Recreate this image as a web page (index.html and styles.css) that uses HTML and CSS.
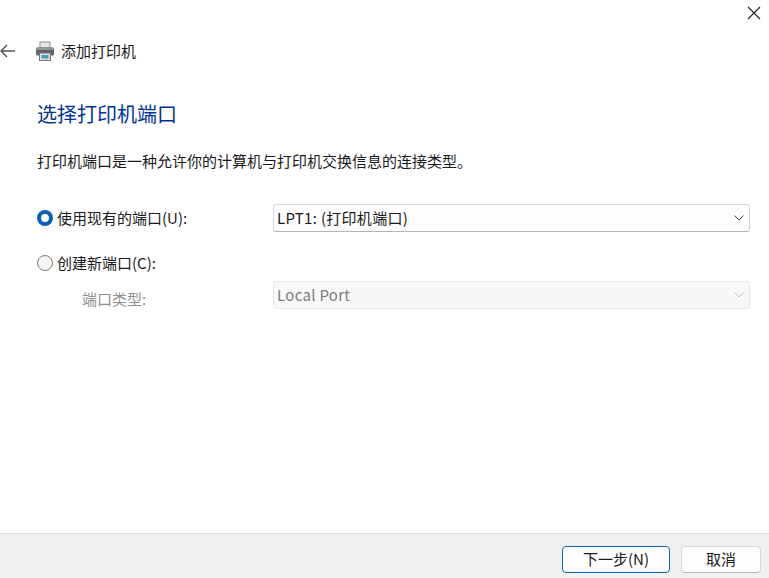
FILE: index.html
```html
<!DOCTYPE html>
<html lang="zh">
<head>
<meta charset="utf-8">
<title>添加打印机</title>
<link rel="stylesheet" href="styles.css">
</head>
<body>
<div class="dialog">
  <div class="closebar">
    <svg class="close" width="14" height="14" viewBox="0 0 14 14"><path d="M1 1L13 13M13 1L1 13" stroke="#222" stroke-width="1.1" fill="none"/></svg>
  </div>
  <div class="nav">
    <svg class="back" width="16" height="14" viewBox="0 0 16 14"><path d="M15 7H1M7 1L1 7L7 13" stroke="#555" stroke-width="1.5" fill="none"/></svg>
    <svg class="printer" width="20" height="20" viewBox="0 0 20 20">
      <rect x="5" y="1" width="10" height="6" fill="#e9e9ec" stroke="#8a8a90"/>
      <rect x="1" y="6.5" width="18" height="8" rx="1.5" fill="#5f6368"/>
      <rect x="1" y="6.5" width="18" height="2.5" rx="1" fill="#94979c"/>
      <rect x="4.5" y="12" width="11" height="7.5" fill="#dfe3e6" stroke="#70757a"/>
      <rect x="6.5" y="14" width="7" height="3.5" fill="#3f9fb5"/>
    </svg>
    <span class="navtitle">添加打印机</span>
  </div>
  <main class="content">
    <h1 class="heading">选择打印机端口</h1>
    <p class="desc">打印机端口是一种允许你的计算机与打印机交换信息的连接类型。</p>
    <div class="formgrid">
      <label class="option">
        <span class="radio radio-on"></span>
        <span class="optiontext">使用现有的端口(U):</span>
      </label>
      <div class="select">
        <span class="value">LPT1: (打印机端口)</span>
        <svg class="chev" width="10" height="6" viewBox="0 0 10 6"><path d="M0.5 0.5L5 5L9.5 0.5" stroke="#444" stroke-width="1" fill="none"/></svg>
      </div>
      <label class="option option-new">
        <span class="radio"></span>
        <span>创建新端口(C):</span>
      </label>
      <div></div>
      <div class="typelabel">端口类型:</div>
      <div class="select select-off">
        <span class="value">Local Port</span>
        <svg class="chev" width="10" height="6" viewBox="0 0 10 6"><path d="M0.5 0.5L5 5L9.5 0.5" stroke="#c4c4c4" stroke-width="1" fill="none"/></svg>
      </div>
    </div>
  </main>
  <footer class="footer">
    <button class="btn btn-primary">下一步(N)</button>
    <button class="btn">取消</button>
  </footer>
</div>
</body>
</html>
```
FILE: styles.css
```css
* { box-sizing: border-box; }
html, body { margin: 0; height: 100%; background: #fff; }
body {
  font-family: "Noto Sans CJK SC", "Noto Sans", sans-serif;
  font-size: 15px;
  color: #1a1a1a;
  overflow: hidden;
}
.dialog { display: flex; flex-direction: column; width: 769px; height: 578px; }
.closebar { height: 28px; display: flex; justify-content: flex-end; padding: 6px 8px 0 0; }
.close { display: block; }
.nav { height: 46px; display: flex; align-items: center; }
.printer { margin-left: 19px; }
.navtitle { margin-left: 6px; line-height: 20px; margin-top: -1px; }
.content { flex: 1; padding: 0 19px 0 37px; }
.heading { margin: 26px 0 0; font-size: 20px; font-weight: 400; line-height: 28px; color: #003399; }
.desc { margin: 23px 0 0; line-height: 20px; }
.formgrid {
  display: grid;
  grid-template-columns: 236px 1fr;
  grid-template-rows: 28px 49px 28px;
  margin-top: 33px;
  align-items: center;
}
.option { display: flex; align-items: center; }
.optiontext { margin-top: -1px; }
.option-new { align-self: end; margin-bottom: 8px; }
.radio {
  width: 16px; height: 16px; border-radius: 50%;
  border: 1px solid #7c7c7c; background: #f4f4f4;
  margin-right: 4px;
}
.radio-on { border: 4.5px solid #0760b8; background: #fff; }
.typelabel { padding: 6px 0 0 45px; color: #8e8e8e; }
.select {
  height: 28px; display: flex; align-items: center; justify-content: space-between;
  padding: 0 5px 0 3px; background: #fdfdfd;
  border: 1px solid #d4d4d4; border-bottom-color: #b5b5b5; border-radius: 3px;
}
.value { margin-top: -2px; letter-spacing: 0.3px; }
.select-off { background: #f8f8f8; border-color: #e9e9e9; color: #7d7d7d; }
.footer {
  height: 45px; background: #f0f0f0; border-top: 1px solid #dfdfdf;
  display: flex; justify-content: flex-end; align-items: flex-start;
  gap: 11px; padding: 12px 8px 0 0;
}
.btn {
  font: inherit; color: #1a1a1a; width: 80px; height: 27px; padding: 0 0 3px;
  background: #fdfdfd; border: 1px solid #d6d6d6; border-bottom-color: #b8b8b8; border-radius: 4px;
}
.btn-primary { width: 108px; border: 1px solid #0a66b5; }
```
